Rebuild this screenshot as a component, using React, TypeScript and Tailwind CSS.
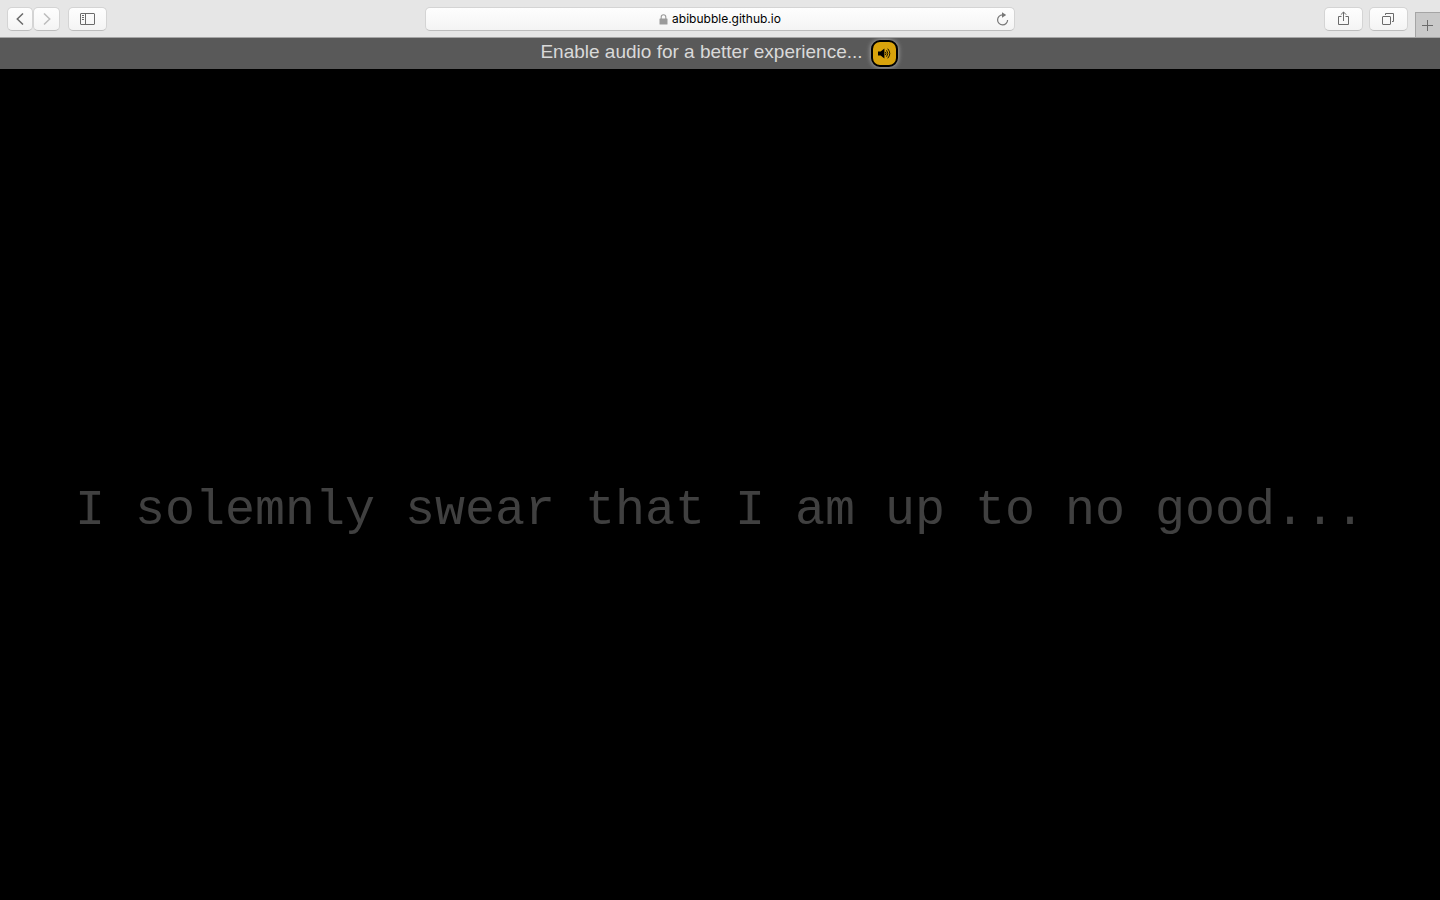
import type { ReactNode } from "react";

const buttonLook =
  "flex h-6 items-center justify-center rounded-[5px] border border-[#d4d4d4] border-b-[#bdbdbd] bg-linear-to-b from-[#fefefe] to-[#f4f4f4]";

function ToolButton({ label, size, children }: { label: string; size: string; children: ReactNode }) {
  return (
    <button type="button" aria-label={label} className={`${buttonLook} ${size}`}>
      {children}
    </button>
  );
}

function BrowserBar() {
  return (
    <header className="grid h-[38px] shrink-0 grid-cols-[1fr_590px_1fr] border-b border-[#a5a5a5] bg-[#e6e6e6] pt-[7px]">
      <nav aria-label="History" className="flex pl-[7px]">
        <ToolButton label="Back" size="w-[26px]">
          <svg width="8" height="12" viewBox="0 0 8 12" fill="none" stroke="#6b6b6b" strokeWidth="1.5">
            <path d="M7 .5 1.3 6 7 11.5" />
          </svg>
        </ToolButton>
        <ToolButton label="Forward" size="w-[27px]">
          <svg width="8" height="12" viewBox="0 0 8 12" fill="none" stroke="#bdbdbd" strokeWidth="1.5">
            <path d="M1 .5 6.7 6 1 11.5" />
          </svg>
        </ToolButton>
        <div className="pl-2">
          <ToolButton label="Sidebar" size="w-[39px]">
            <svg width="15" height="12" viewBox="0 0 15 12" fill="none" stroke="#6b6b6b">
              <rect x=".5" y=".5" width="14" height="11" rx=".5" />
              <path d="M5.5 1v10M2 2.5h2M2 4.5h2M2 6.5h2" />
            </svg>
          </ToolButton>
        </div>
      </nav>

      <div className={`${buttonLook} relative gap-1`}>
        <svg width="9" height="11" viewBox="0 0 9 11" fill="none">
          <path d="M2.2 5V3a2.3 2.3 0 0 1 4.6 0v2" stroke="#9b9b9b" strokeWidth="1.1" />
          <rect x=".5" y="4.5" width="8" height="6" rx=".6" fill="#9b9b9b" />
        </svg>
        <a href="#" className="font-['Inter',sans-serif] text-[12px] leading-4 text-black">
          abibubble.github.io
        </a>
        <button type="button" aria-label="Reload" className="absolute right-[5px]">
          <svg width="13" height="14" viewBox="0 0 13 14" fill="none">
            <path d="M6.5 2.9A5 5 0 1 0 11.6 8" stroke="#777" strokeWidth="1.2" />
            <path d="M6 .2 10.2 3 6 5.8z" fill="#777" />
          </svg>
        </button>
      </div>

      <div className="flex justify-end">
        <ToolButton label="Share" size="w-[39px]">
          <svg width="11" height="16" viewBox="0 0 11 16" fill="none" stroke="#6b6b6b">
            <path d="M3.5 5.5h-3v8h10v-8h-3M5.5 10V1M2.8 3.7 5.5 1l2.7 2.7" />
          </svg>
        </ToolButton>
        <div className="pr-[7px] pl-[6px]">
          <ToolButton label="Show tabs" size="w-[39px]">
            <svg width="13" height="12" viewBox="0 0 13 12" fill="none" stroke="#6b6b6b">
              <rect x=".5" y="3.5" width="8" height="8" rx=".5" />
              <path d="M3.5 2V.5h8v8H10" />
            </svg>
          </ToolButton>
        </div>
        <button
          type="button"
          aria-label="New tab"
          className="mt-[5px] flex h-[25px] w-[25px] items-center justify-center border-t border-l border-[#a5a5a5] bg-[#c9c9c9]"
        >
          <svg width="12" height="11" viewBox="0 0 12 11" stroke="#6b6b6b">
            <path d="M0 5.5h11M5.5 0v11" />
          </svg>
        </button>
      </div>
    </header>
  );
}

function AudioBar() {
  return (
    <div className="flex h-[31px] shrink-0 items-center justify-center gap-2 overflow-hidden bg-[#595959] pr-0.5">
      <label
        htmlFor="audio"
        className="pb-1 font-['Helvetica_Neue','Liberation_Sans',sans-serif] text-[19px] leading-6 text-[#d9d9d9]"
      >
        Enable audio for a better experience...
      </label>
      <button
        id="audio"
        type="button"
        aria-label="Enable audio"
        className="flex size-[27px] items-center justify-center rounded-[9px] border-2 border-black bg-[#d9a30c] shadow-[0_0_5px_#bbbbbb]"
      >
        <svg width="13" height="11" viewBox="0 0 13 11" fill="none">
          <path d="M0 3.5h2.6L6.4.6v9.8L2.6 7.5H0z" fill="#000" />
          <path
            d="M7.6 4.2q1.1 1.3 0 2.6M8.8 2.6q2.3 2.9 0 5.8M10 1q3.8 4.5 0 9"
            stroke="#000"
            strokeWidth=".9"
            strokeLinecap="round"
          />
        </svg>
      </button>
    </div>
  );
}

export default function App() {
  return (
    <div className="flex min-h-screen flex-col bg-black">
      <BrowserBar />
      <AudioBar />
      <main className="flex grow items-center justify-center pt-[52px]">
        <h1 className="text-center font-['Courier_New','Liberation_Mono',monospace] text-[50px] leading-[56px] text-[#404040]">
          I solemnly swear that I am up to no good...
        </h1>
      </main>
    </div>
  );
}
